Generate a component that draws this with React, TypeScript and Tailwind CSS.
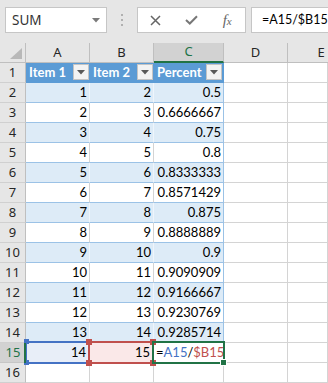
import React from "react";

type RowData = { n: number; a: string; b: string; c: string };

const data: RowData[] = [
  { n: 2, a: "1", b: "2", c: "0.5" },
  { n: 3, a: "2", b: "3", c: "0.6666667" },
  { n: 4, a: "3", b: "4", c: "0.75" },
  { n: 5, a: "4", b: "5", c: "0.8" },
  { n: 6, a: "5", b: "6", c: "0.8333333" },
  { n: 7, a: "6", b: "7", c: "0.8571429" },
  { n: 8, a: "7", b: "8", c: "0.875" },
  { n: 9, a: "8", b: "9", c: "0.8888889" },
  { n: 10, a: "9", b: "10", c: "0.9" },
  { n: 11, a: "10", b: "11", c: "0.9090909" },
  { n: 12, a: "11", b: "12", c: "0.9166667" },
  { n: 13, a: "12", b: "13", c: "0.9230769" },
  { n: 14, a: "13", b: "14", c: "0.9285714" },
];

function RowHeader({ n, active }: { n: number; active?: boolean }) {
  return active ? (
    <div className="w-[26px] h-full shrink-0 bg-[#d2d2d2] border-b border-b-[#c6c6c6] flex items-center justify-center text-[#217346] text-[13px] font-['Noto_Sans',sans-serif] relative">
      {n}
      <div className="absolute right-0 top-[-1px] bottom-[-1px] w-[2px] bg-[#217346]" />
    </div>
  ) : (
    <div className="w-[26px] h-full shrink-0 bg-[#e6e6e6] border-r border-r-[#bfbfbf] border-b border-b-[#d0d0d0] flex items-center justify-center text-[#262626] text-[13px] font-['Noto_Sans',sans-serif]">
      {n}
    </div>
  );
}

function FilterBtn() {
  return (
    <div className="absolute right-[1px] top-[1px] w-[16px] h-[16px] bg-[#f3f3f3] border border-[#c4c4c4] flex items-center justify-center">
      <svg width="8" height="5" viewBox="0 0 8 5">
        <path d="M0 0 L8 0 L4 4.5 Z" fill="#595959" />
      </svg>
    </div>
  );
}

function EmptyCells() {
  return (
    <>
      <div className="w-[64px] h-full shrink-0 bg-white border-r border-r-[#d4d4d4] border-b border-b-[#d4d4d4]" />
      <div className="w-[40px] h-full shrink-0 bg-white border-r border-r-[#d4d4d4] border-b border-b-[#d4d4d4]" />
    </>
  );
}

export default function App() {
  const cell = "font-['Lato',sans-serif] text-[13px] text-black";
  return (
    <div className="w-[328px] h-[383px] overflow-hidden bg-white select-none">
      {/* Formula bar */}
      <div className="h-[43px] bg-[#e6e6e6] flex items-start pt-[7px] pl-[5px]">
        <div className="w-[102px] h-[26px] bg-white border border-[#c6c6c6] flex items-center justify-between pl-[6px] pr-[6px] font-['Noto_Sans',sans-serif] text-[13.5px] text-[#333]">
          <span>SUM</span>
          <svg width="8" height="5" viewBox="0 0 8 5">
            <path d="M0 0 L8 0 L4 4.5 Z" fill="#7a7a7a" />
          </svg>
        </div>
        <div className="w-[30px] h-[26px] flex flex-col items-center justify-center gap-[3px]">
          <div className="w-[2px] h-[2px] bg-[#b0b0b0]" />
          <div className="w-[2px] h-[2px] bg-[#b0b0b0]" />
          <div className="w-[2px] h-[2px] bg-[#b0b0b0]" />
        </div>
        <div className="w-[109px] h-[26px] bg-white border border-[#c6c6c6] flex items-center">
          <div className="flex-1 flex items-center justify-center">
            <svg width="11" height="11" viewBox="0 0 11 11">
              <path d="M1 1 L10 10 M10 1 L1 10" stroke="#666" strokeWidth="1.5" fill="none" />
            </svg>
          </div>
          <div className="flex-1 flex items-center justify-center">
            <svg width="13" height="10" viewBox="0 0 13 10">
              <path d="M1 5 L4.8 8.5 L12 1.2" stroke="#777" strokeWidth="2" fill="none" />
            </svg>
          </div>
          <div className="flex-1 flex items-center justify-center font-['Liberation_Serif',serif] italic text-[#666]">
            <span className="text-[15px] leading-none">f</span>
            <span className="text-[11px] leading-none mt-[3px]">x</span>
          </div>
        </div>
        <div className="ml-[5px] flex-1 -mr-[4px] h-[26px] bg-white border border-[#c6c6c6] flex items-center pl-[10px] font-['Lato',sans-serif] text-[12.5px] text-black whitespace-nowrap">
          =A15/$B15
        </div>
      </div>

      {/* Grid */}
      <div className="relative">
        {/* Column header row */}
        <div className="flex h-[20px]">
          <div className="w-[26px] h-full shrink-0 bg-[#e6e6e6] border-r border-r-[#bfbfbf] border-b border-b-[#bfbfbf] relative">
            <svg className="absolute right-[3px] bottom-[3px]" width="12" height="11" viewBox="0 0 12 11">
              <path d="M12 0 L12 11 L0 11 Z" fill="#b8b8b8" />
            </svg>
          </div>
          <div className="w-[64px] h-full shrink-0 bg-[#e6e6e6] border-r border-r-[#bfbfbf] border-b border-b-[#bfbfbf] flex items-center justify-center text-[13px] text-[#262626] font-['Noto_Sans',sans-serif]">A</div>
          <div className="w-[64px] h-full shrink-0 bg-[#e6e6e6] border-r border-r-[#bfbfbf] border-b border-b-[#bfbfbf] flex items-center justify-center text-[13px] text-[#262626] font-['Noto_Sans',sans-serif]">B</div>
          <div className="w-[70px] h-full shrink-0 bg-[#d2d2d2] border-r border-r-[#bfbfbf] border-b-2 border-b-[#217346] flex items-center justify-center text-[13px] text-[#217346] font-['Noto_Sans',sans-serif]">C</div>
          <div className="w-[64px] h-full shrink-0 bg-[#e6e6e6] border-r border-r-[#bfbfbf] border-b border-b-[#bfbfbf] flex items-center justify-center text-[13px] text-[#262626] font-['Noto_Sans',sans-serif]">D</div>
          <div className="w-[40px] h-full shrink-0 bg-[#e6e6e6] border-b border-b-[#bfbfbf] flex items-center justify-center text-[13px] text-[#262626] font-['Noto_Sans',sans-serif] pl-[26px]">E</div>
        </div>

        {/* Row 1: table header */}
        <div className="flex h-[20px]">
          <RowHeader n={1} />
          <div className={`w-[64px] h-full shrink-0 bg-[#5b9bd5] border-b border-b-[#5b9bd5] relative flex items-center pl-[3px] ${cell} font-bold text-white`}>
            Item 1
            <FilterBtn />
          </div>
          <div className={`w-[64px] h-full shrink-0 bg-[#5b9bd5] border-b border-b-[#5b9bd5] relative flex items-center pl-[3px] ${cell} font-bold text-white`}>
            Item 2
            <FilterBtn />
          </div>
          <div className={`w-[70px] h-full shrink-0 bg-[#5b9bd5] border-b border-b-[#5b9bd5] border-r border-r-[#5b9bd5] relative flex items-center pl-[3px] ${cell} font-bold text-white`}>
            Percent
            <FilterBtn />
          </div>
          <EmptyCells />
        </div>

        {/* Data rows */}
        {data.map((r) => {
          const band = r.n % 2 === 0;
          const bg = band ? "bg-[#ddebf7]" : "bg-white";
          const vr = band ? "border-r-[#eef5fc]" : "border-r-[#d4d4d4]";
          return (
            <div key={r.n} className="flex h-[20px]">
              <RowHeader n={r.n} />
              <div className={`w-[64px] h-full shrink-0 ${bg} border-r ${vr} border-b border-b-[#9bc2e6] flex items-center justify-end pr-[2px] ${cell}`}>{r.a}</div>
              <div className={`w-[64px] h-full shrink-0 ${bg} border-r ${vr} border-b border-b-[#9bc2e6] flex items-center justify-end pr-[2px] ${cell}`}>{r.b}</div>
              <div className={`w-[70px] h-full shrink-0 ${bg} border-r border-r-[#9bc2e6] border-b border-b-[#9bc2e6] flex items-center justify-end pr-[2px] ${cell}`}>{r.c}</div>
              <EmptyCells />
            </div>
          );
        })}

        {/* Row 15 */}
        <div className="flex h-[20px]">
          <RowHeader n={15} active />
          <div className={`w-[64px] h-full shrink-0 bg-[#e8eef8] border-r border-r-[#d4d4d4] border-b border-b-[#9bc2e6] flex items-center justify-end pr-[3px] ${cell}`}>14</div>
          <div className={`w-[64px] h-full shrink-0 bg-[#fae8e8] border-r border-r-[#d4d4d4] border-b border-b-[#9bc2e6] flex items-center justify-end pr-[3px] ${cell}`}>15</div>
          <div className={`w-[70px] h-full shrink-0 bg-white border-r border-r-[#9bc2e6] border-b border-b-[#9bc2e6] flex items-center pl-[2px] ${cell}`}>
            <span>=</span>
            <span className="text-[#4472c4]">A15</span>
            <span>/</span>
            <span className="text-[#c0504d]">$B15</span>
          </div>
          <EmptyCells />
        </div>

        {/* Row 16 */}
        <div className="flex h-[20px]">
          <RowHeader n={16} />
          <div className="w-[64px] h-full shrink-0 bg-white border-r border-r-[#d4d4d4] border-b border-b-[#d4d4d4]" />
          <div className="w-[64px] h-full shrink-0 bg-white border-r border-r-[#d4d4d4] border-b border-b-[#d4d4d4]" />
          <div className="w-[70px] h-full shrink-0 bg-white border-r border-r-[#d4d4d4] border-b border-b-[#d4d4d4]" />
          <EmptyCells />
        </div>

        {/* Reference highlight overlays */}
        <div className="absolute left-[25px] top-[298px] w-[65px] h-[23px] border-2 border-[#4472c4] pointer-events-none" />
        <div className="absolute left-[24px] top-[296px] w-[5px] h-[5px] bg-[#4472c4]" />
        <div className="absolute left-[24px] top-[317px] w-[5px] h-[5px] bg-[#4472c4]" />
        <div className="absolute left-[88px] top-[298px] w-[66px] h-[23px] border-2 border-[#c0504d] pointer-events-none" />
        <div className="absolute left-[86px] top-[296px] w-[6px] h-[6px] bg-[#c0504d]" />
        <div className="absolute left-[86px] top-[317px] w-[6px] h-[6px] bg-[#c0504d]" />
        <div className="absolute left-[150px] top-[296px] w-[6px] h-[6px] bg-[#c0504d]" />
        <div className="absolute left-[150px] top-[317px] w-[6px] h-[6px] bg-[#c0504d]" />
        {/* Active cell */}
        <div className="absolute left-[152px] top-[298px] w-[73px] h-[23px] border-2 border-[#217346] pointer-events-none" />
        <div className="absolute left-[220px] top-[316px] w-[7px] h-[7px] bg-[#217346] border border-white" />
        {/* Row header green edge */}
        <div className="absolute left-[24px] top-[300px] w-[2px] h-[20px] bg-[#217346]" />
      </div>
    </div>
  );
}
